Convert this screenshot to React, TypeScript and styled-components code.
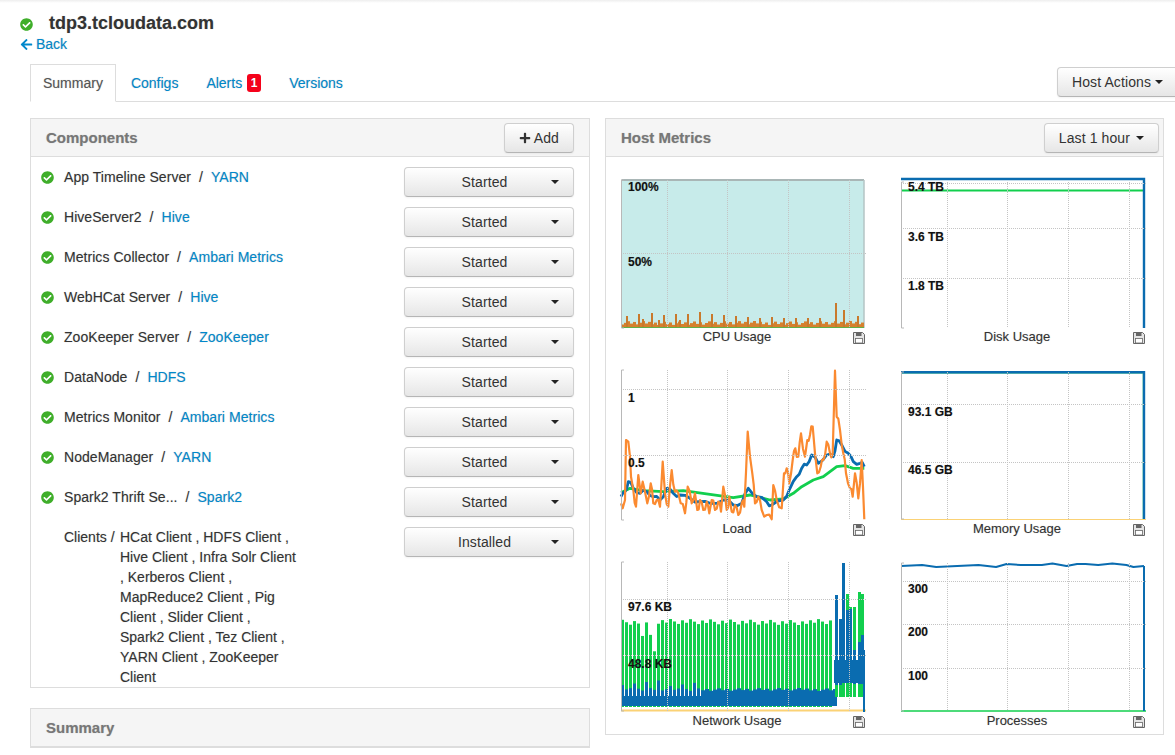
import React, { FC, ReactNode } from 'react'
import styled, { createGlobalStyle } from 'styled-components'
import { FaArrowLeft, FaCheckCircle, FaPlus } from 'react-icons/fa'

type Label = { y: number; text: string }
type ChartProps = {
  title: string
  top: number
  bottom: number
  grid: number[]
  labels: Label[]
  children?: ReactNode
}
type Pt = [number, number]

const BLUE = '#0a6cb0'
const GREEN = '#12cf4e'
const ORANGE = '#fb8a30'
const YELLOW = '#fbd275'
const GRID_X = [46, 106, 167, 228]

const components = [
  { name: 'App Timeline Server', service: 'YARN' },
  { name: 'HiveServer2', service: 'Hive' },
  { name: 'Metrics Collector', service: 'Ambari Metrics' },
  { name: 'WebHCat Server', service: 'Hive' },
  { name: 'ZooKeeper Server', service: 'ZooKeeper' },
  { name: 'DataNode', service: 'HDFS' },
  { name: 'Metrics Monitor', service: 'Ambari Metrics' },
  { name: 'NodeManager', service: 'YARN' },
  { name: 'Spark2 Thrift Se...', service: 'Spark2' },
]

const clients =
  'HCat Client , HDFS Client , Hive Client , Infra Solr Client , Kerberos Client , MapReduce2 Client , Pig Client , Slider Client , Spark2 Client , Tez Client , YARN Client , ZooKeeper Client'

// points below were read off the reference at 3x, offset by the plot origin
const zoomed = (pts: Pt[]) => pts.map(([x, y]) => `${((x - 33) / 3).toFixed(1)},${((y - 30) / 3).toFixed(1)}`).join(' ')

// small repeatable noise so the bars look the same on every run
const noise = (i: number, span: number) => ((i * 7919 + 13) % 101) / 100 * span

// adds a jittered point between far-apart points, the load series is much busier than the hand read points
const roughen = (pts: Pt[], amount: number): Pt[] =>
  pts.flatMap(([x, y], i) => {
    const next = pts[i + 1]
    if (!next || next[0] - x < 8) return [[x, y] as Pt]
    const mid: Pt = [(x + next[0]) / 2, (y + next[1]) / 2 + (i % 2 ? amount : -amount) * (0.4 + noise(i, 0.6))]
    return [[x, y] as Pt, mid]
  })

const loadOrange: Pt[] = [
  [33, 430], [38, 445], [45, 420], [48, 240], [55, 245], [60, 290], [63, 350], [70, 390], [78, 440], [85, 345],
  [92, 400], [98, 365], [105, 395], [112, 430], [122, 370], [130, 430], [140, 420], [150, 440], [158, 305], [165, 400],
  [175, 440], [185, 330], [195, 395], [205, 400], [212, 430], [225, 460], [233, 380], [245, 430], [255, 400], [262, 450],
  [270, 420], [280, 450], [290, 425], [298, 460], [305, 420], [315, 450], [325, 425], [333, 455], [340, 380], [350, 450],
  [358, 410], [365, 455], [375, 435], [385, 465], [395, 430], [403, 440], [413, 215], [420, 290], [427, 340], [435, 430],
  [445, 410], [455, 450], [470, 465], [485, 478], [490, 375], [500, 420], [515, 445], [522, 340], [530, 325], [538, 370],
  [548, 300], [556, 265], [565, 290], [573, 220], [585, 290], [592, 240], [600, 225], [608, 200], [615, 280], [622, 340],
  [632, 320], [640, 300], [650, 245], [660, 280], [668, 280], [675, 32], [680, 170], [690, 210], [700, 280], [708, 340],
  [720, 385], [728, 410], [735, 340], [745, 415], [755, 300], [763, 478],
]

const loadBlue: Pt[] = [
  [33, 410], [45, 395], [55, 365], [70, 385], [90, 400], [110, 395], [130, 410], [150, 420], [170, 385], [190, 400],
  [210, 405], [240, 415], [270, 425], [300, 430], [340, 420], [370, 435], [395, 430], [415, 385], [440, 410], [470, 425],
  [485, 435], [520, 420], [540, 385], [560, 350], [575, 325], [590, 315], [605, 285], [625, 310], [650, 285], [670, 290],
  [680, 240], [695, 255], [715, 280], [730, 305], [750, 310], [763, 320],
]

const loadGreen: Pt[] = [
  [33, 398], [60, 385], [100, 392], [160, 395], [220, 392], [300, 403], [370, 413], [420, 405], [480, 420], [520, 417],
  [550, 400], [575, 380], [610, 360], [640, 350], [680, 320], [705, 317], [730, 325], [763, 325],
]

const processesBlue: Pt[] = [
  [0, 4], [30, 3], [50, 5], [80, 4], [110, 3], [135, 5], [150, 2], [170, 3], [200, 3], [215, 1.5],
  [235, 4], [250, 2], [262, 2], [280, 3], [300, 1.5], [320, 3], [330, 5], [345, 4],
]

const cpuPeaks: Pt[] = [
  [5, 12], [17, 14], [21, 9], [30, 15], [37, 8], [42, 13], [54, 14], [58, 8], [66, 14], [78, 16],
  [90, 14], [102, 13], [114, 12], [126, 11], [138, 10], [150, 11], [162, 10], [174, 10], [186, 10], [198, 10],
  [214, 25], [222, 18], [236, 12],
]

// x, green top, blue top, blue bottom at the burst on the right of the network plot
const networkBurst: [number, number, number, number][] = [
  [214, 60, 33, 123], [218, 80, 57, 123], [221, 50, 1, 120], [225, 32, 48, 120], [228, 45, 47, 120], [232, 45, 88, 122],
  [237, 30, 80, 122], [240, 32, 73, 122],
]

const Chart: FC<ChartProps> = ({ title, top, bottom, grid, labels, children }) => (
  <ChartCell>
    <Plot width="248" height="150">
      {children}
      <g stroke="#c4c4c4" strokeDasharray="1 1" fill="none">
        {grid.map((y) => (
          <line key={y} x1="0" x2="246" y1={y + 0.5} y2={y + 0.5} />
        ))}
        {GRID_X.map((x) => (
          <line key={x} x1={x + 0.5} x2={x + 0.5} y1={top} y2={bottom} />
        ))}
      </g>
      <path d={`M3 ${top}H0.5V${bottom}H3`} fill="none" stroke="#b8b8b8" />
      {labels.map((label) => (
        <AxisLabel key={label.text} x="7" y={label.y + 4}>
          {label.text}
        </AxisLabel>
      ))}
    </Plot>
    <CaptionRow>
      <Caption>{title}</Caption>
      <SaveIcon />
    </CaptionRow>
  </ChartCell>
)

const SaveIcon: FC = () => (
  <svg width="12" height="12" viewBox="0 0 12 12">
    <path d="M0.5 0.5H9.5L11.5 2.5V11.5H0.5Z" fill="#e4e4e4" stroke="#666" />
    <rect x="3" y="1" width="5.5" height="3" fill="#666" />
    <rect x="2.5" y="6.5" width="7" height="4.5" fill="#fff" stroke="#666" strokeWidth="0.8" />
  </svg>
)

const CpuSeries: FC = () => (
  <>
    <rect x="0" y="2" width="243" height="148" fill="#c7ebea" />
    <path d="M0.5 2H243" stroke="#a9b6b6" strokeWidth="2" />
    <path d="M243 2V150" stroke="#b5c4c4" strokeWidth="1.5" />
    {Array.from({ length: 81 }, (_, i) => (
      <rect key={i} x={i * 3} y={147 - noise(i, 4)} width="3" height={3 + noise(i, 4)} fill="#d5802e" />
    ))}
    {cpuPeaks.map(([x, h]) => (
      <rect key={x} x={x} y={150 - h} width="2" height={h} fill="#c9792c" />
    ))}
    <path d="M0 149.5H243" stroke="#5fb04a" />
  </>
)

const LoadSeries: FC = () => (
  <>
    <Line points={zoomed(loadGreen)} stroke={GREEN} strokeWidth="2.8" />
    <Line points={zoomed(roughen(loadBlue, 8))} stroke={BLUE} strokeWidth="2.8" />
    <Line points={zoomed(roughen(loadOrange, 14))} stroke={ORANGE} strokeWidth="2.2" />
  </>
)

const NetworkSeries: FC = () => (
  <>
    <path d="M0 148.5H245" stroke={YELLOW} strokeWidth="2" />
    {Array.from({ length: 53 }, (_, i) => {
      const dip = i === 5 ? 16 : i === 8 ? 30 : i === 7 ? 10 : 0
      const y = 57 + noise(i, 6) + dip
      return <rect key={i} x={i * 4} y={y} width="3" height={145 - y} fill={GREEN} />
    })}
    <rect x="0" y="134" width="213" height="10" fill={BLUE} />
    {Array.from({ length: 54 }, (_, i) => {
      const spike = i < 20 && i % 3 === 0 ? 5 + noise(i, 7) : noise(i, 3)
      const y = 129 - spike
      return <rect key={i} x={i * 4} y={y} width={i < 20 ? 3 : 4} height={144 - y} fill={BLUE} />
    })}
    {networkBurst.map(([x, green]) => (
      <rect key={x} x={x} y={green} width="3" height={135 - green} fill={GREEN} />
    ))}
    <rect x="213" y="98" width="30" height="23" fill={BLUE} />
    {networkBurst.map(([x, , blue, end]) => (
      <rect key={x} x={x} y={blue} width="3" height={end - blue} fill={BLUE} />
    ))}
    <path d="M243 88V150" stroke={BLUE} strokeWidth="2" />
  </>
)

const DiskSeries: FC = () => (
  <>
    <path d="M0 12.5H243" stroke={GREEN} strokeWidth="2" />
    <path d="M0 1H243V150" fill="none" stroke={BLUE} strokeWidth="2.4" />
  </>
)

const MemorySeries: FC = () => (
  <>
    <path d="M0 149.5H245" stroke={YELLOW} />
    <path d="M0 3.5H242V149" fill="none" stroke="#8fe3ac" strokeWidth="1" />
    <path d="M0 2.2H243V149" fill="none" stroke={BLUE} strokeWidth="2.4" />
  </>
)

const ProcessesSeries: FC = () => (
  <>
    <path d="M0 149H245" stroke={GREEN} strokeWidth="1.4" />
    <Line
      points={processesBlue.map(([x, y]) => `${(x * 243) / 345},${y}`).join(' ')}
      stroke={BLUE}
      strokeWidth="2"
    />
    <path d="M243 4V149" stroke={BLUE} strokeWidth="2" />
  </>
)

const DropButton: FC<{ label: string }> = ({ label }) => (
  <StatusButton>
    <StatusLabel>{label}</StatusLabel>
    <Caret />
  </StatusButton>
)

const App: FC = () => (
  <>
    <GlobalStyle />
    <Page>
      <TopShade />
      <HostHeader>
        <HostTitle>
          <GreenCheck />
          <HostName>tdp3.tcloudata.com</HostName>
        </HostTitle>
        <BackLink>
          <FaArrowLeft size={13} />
          Back
        </BackLink>
      </HostHeader>
      <TabRow>
        <Tabs>
          <Tab $active>Summary</Tab>
          <Tab>Configs</Tab>
          <Tab>
            Alerts<Badge>1</Badge>
          </Tab>
          <Tab>Versions</Tab>
        </Tabs>
        <HostActions>
          Host Actions
          <Caret />
        </HostActions>
      </TabRow>
      <Columns>
        <LeftColumn>
          <Panel>
            <PanelHeader>
              <PanelTitle>Components</PanelTitle>
              <AddButton>
                <FaPlus size={12} />
                Add
              </AddButton>
            </PanelHeader>
            <ComponentList>
              {components.map((c) => (
                <ComponentRow key={c.name}>
                  <ComponentInfo>
                    <RowCheck />
                    {c.name}
                    <Slash>/</Slash>
                    <ServiceLink>{c.service}</ServiceLink>
                  </ComponentInfo>
                  <DropButton label="Started" />
                </ComponentRow>
              ))}
              <ClientsRow>
                <ClientsInfo>
                  <ClientsLabel>Clients /</ClientsLabel>
                  <ClientsList>{clients}</ClientsList>
                </ClientsInfo>
                <DropButton label="Installed" />
              </ClientsRow>
            </ComponentList>
          </Panel>
          <Panel>
            <PanelHeader>
              <PanelTitle>Summary</PanelTitle>
            </PanelHeader>
          </Panel>
        </LeftColumn>
        <RightPanel>
          <PanelHeader $tight>
            <PanelTitle>Host Metrics</PanelTitle>
            <RangeButton>
              Last 1 hour
              <Caret />
            </RangeButton>
          </PanelHeader>
          <ChartGrid>
            <Chart title="CPU Usage" top={2} bottom={150} grid={[75]} labels={[{ y: 9, text: '100%' }, { y: 84, text: '50%' }]}>
              <CpuSeries />
            </Chart>
            <Chart
              title="Disk Usage"
              top={4}
              bottom={150}
              grid={[5, 50, 100]}
              labels={[{ y: 9, text: '5.4 TB' }, { y: 59, text: '3.6 TB' }, { y: 108, text: '1.8 TB' }]}
            >
              <DiskSeries />
            </Chart>
            <Chart title="Load" top={0} bottom={150} grid={[19, 85]} labels={[{ y: 28, text: '1' }, { y: 93, text: '0.5' }]}>
              <LoadSeries />
            </Chart>
            <Chart
              title="Memory Usage"
              top={2}
              bottom={149}
              grid={[34, 92]}
              labels={[{ y: 42, text: '93.1 GB' }, { y: 100, text: '46.5 GB' }]}
            >
              <MemorySeries />
            </Chart>
            <Chart
              title="Network Usage"
              top={0}
              bottom={149}
              grid={[37, 93]}
              labels={[{ y: 45, text: '97.6 KB' }, { y: 102, text: '48.8 KB' }]}
            >
              <NetworkSeries />
            </Chart>
            <Chart
              title="Processes"
              top={1}
              bottom={149}
              grid={[19, 62, 106]}
              labels={[{ y: 27, text: '300' }, { y: 70, text: '200' }, { y: 114, text: '100' }]}
            >
              <ProcessesSeries />
            </Chart>
          </ChartGrid>
        </RightPanel>
      </Columns>
    </Page>
  </>
)

export default App

const GlobalStyle = createGlobalStyle`
  html, body {
    margin: 0;
    height: 755px;
    overflow: hidden;
    background: #fff;
    color: #333;
    font: 14px/20px "Liberation Sans", Arial, sans-serif;
    text-shadow: 0 0 1px rgba(51, 51, 51, 0.3);
  }
`

const Page = styled.div`
  display: flex;
  flex-direction: column;
  width: 1175px;
`

const TopShade = styled.div`
  height: 3px;
  background: linear-gradient(#eeeeee, #ffffff);
`

const HostHeader = styled.header`
  display: flex;
  flex-direction: column;
  padding: 10px 0 10px 20px;
`

const HostTitle = styled.div`
  display: flex;
  align-items: center;
  gap: 16px;
`

const GreenCheck = styled(FaCheckCircle)`
  width: 13px;
  height: 13px;
  margin-top: 2px;
  color: #3fae2a;
`

const RowCheck = styled(GreenCheck)`
  margin: 0 10px 0 0;
  flex: none;
`

const HostName = styled.h1`
  margin: 0;
  font-size: 18px;
  line-height: 20px;
  font-weight: bold;
  color: #333;
`

const BackLink = styled.a`
  display: flex;
  align-items: center;
  gap: 3px;
  margin-top: 1px;
  color: #0088cc;
`

const TabRow = styled.div`
  display: flex;
  justify-content: space-between;
  margin-left: 30px;
  border-bottom: 1px solid #ddd;
  height: 37px;
`

const Tabs = styled.ul`
  display: flex;
  margin: 0;
  padding: 0;
  list-style: none;
`

const Tab = styled.li<{ $active?: boolean }>`
  display: flex;
  align-items: center;
  height: 36px;
  margin-right: 2px;
  padding: 0 12px;
  border: 1px solid ${(p) => (p.$active ? '#ddd' : 'transparent')};
  border-bottom-color: ${(p) => (p.$active ? '#fff' : 'transparent')};
  background: ${(p) => (p.$active ? '#fff' : 'transparent')};
  color: ${(p) => (p.$active ? '#555' : '#0088cc')};
`

const Badge = styled.span`
  display: inline-flex;
  align-items: center;
  justify-content: center;
  width: 14px;
  height: 18px;
  margin-left: 5px;
  border-radius: 3px;
  background: #f5021b;
  color: #fff;
  font-size: 12px;
  font-weight: bold;
`

const GradientButton = styled.button`
  display: inline-flex;
  align-items: center;
  box-sizing: border-box;
  height: 30px;
  padding: 0 14px;
  border: 1px solid #cfcfcf;
  border-bottom-color: #b5b5b5;
  border-radius: 4px;
  background: linear-gradient(#ffffff, #e6e6e6);
  box-shadow: inset 0 1px 0 rgba(255, 255, 255, 0.2), 0 1px 2px rgba(0, 0, 0, 0.05);
  color: #333;
  font: inherit;
  letter-spacing: 0.1px;
`

const HostActions = styled(GradientButton)`
  margin: 3px -3px 0 0;
`

const Caret = styled.span`
  width: 0;
  height: 0;
  margin-left: 4px;
  border-top: 4px solid #222;
  border-left: 4px solid transparent;
  border-right: 4px solid transparent;
`

const Columns = styled.div`
  display: flex;
  align-items: flex-start;
  gap: 15px;
  margin-top: 16px;
  padding-left: 30px;
`

const LeftColumn = styled.div`
  display: flex;
  flex-direction: column;
  gap: 20px;
  width: 560px;
  flex: none;
`

const Panel = styled.section`
  box-sizing: border-box;
  border: 1px solid #ddd;
`

const RightPanel = styled(Panel)`
  width: 559px;
  flex: none;
`

const PanelHeader = styled.div<{ $tight?: boolean }>`
  display: flex;
  align-items: center;
  justify-content: space-between;
  box-sizing: border-box;
  height: 38px;
  padding: 0 ${(p) => (p.$tight ? '4px' : '15px')} 0 15px;
  border-bottom: 1px solid #ddd;
  background: #f5f5f5;
`

const PanelTitle = styled.h2`
  margin: 1px 0 0;
  font-size: 15px;
  line-height: 20px;
  font-weight: bold;
  color: #777;
`

const AddButton = styled(GradientButton)`
  gap: 3px;
`

const RangeButton = styled(GradientButton)`
  gap: 2px;
`

const ComponentList = styled.div`
  display: flex;
  flex-direction: column;
  gap: 10px;
  padding: 10px 15px 0 10px;
`

const ComponentRow = styled.div`
  display: flex;
  justify-content: space-between;
  height: 30px;
`

const ComponentInfo = styled.div`
  display: flex;
  align-items: center;
  align-self: flex-start;
  height: 20px;
  letter-spacing: 0.05px;
`

const Slash = styled.span`
  margin: 0 8px;
`

const ServiceLink = styled.a`
  color: #0088cc;
`

const StatusButton = styled(GradientButton)`
  width: 170px;
  padding: 0 14px 0 17px;
`

const StatusLabel = styled.span`
  flex: 1;
  text-align: center;
`

const ClientsRow = styled.div`
  display: flex;
  justify-content: space-between;
  align-items: flex-start;
`

const ClientsInfo = styled.div`
  display: flex;
  padding-left: 23px;
`

const ClientsLabel = styled.span`
  width: 56px;
  flex: none;
`

const ClientsList = styled.span`
  width: 178px;
`

const ChartGrid = styled.div`
  display: grid;
  grid-template-columns: 280px 243px;
  row-gap: 23px;
  padding: 21px 0 3px 15px;
`

const ChartCell = styled.div`
  display: flex;
  flex-direction: column;
  width: 243px;
`

const Plot = styled.svg`
  display: block;
  overflow: visible;
`

const Line = styled.polyline`
  fill: none;
  stroke-linejoin: round;
`

const AxisLabel = styled.text`
  font: bold 12px "Liberation Sans", Arial, sans-serif;
  fill: #111;
`

const CaptionRow = styled.div`
  display: flex;
  align-items: center;
  height: 19px;
  margin-right: -1px;
`

const Caption = styled.div`
  flex: 1;
  margin-top: -2px;
  text-align: center;
  line-height: 18px;
  font-size: 13px;
`
